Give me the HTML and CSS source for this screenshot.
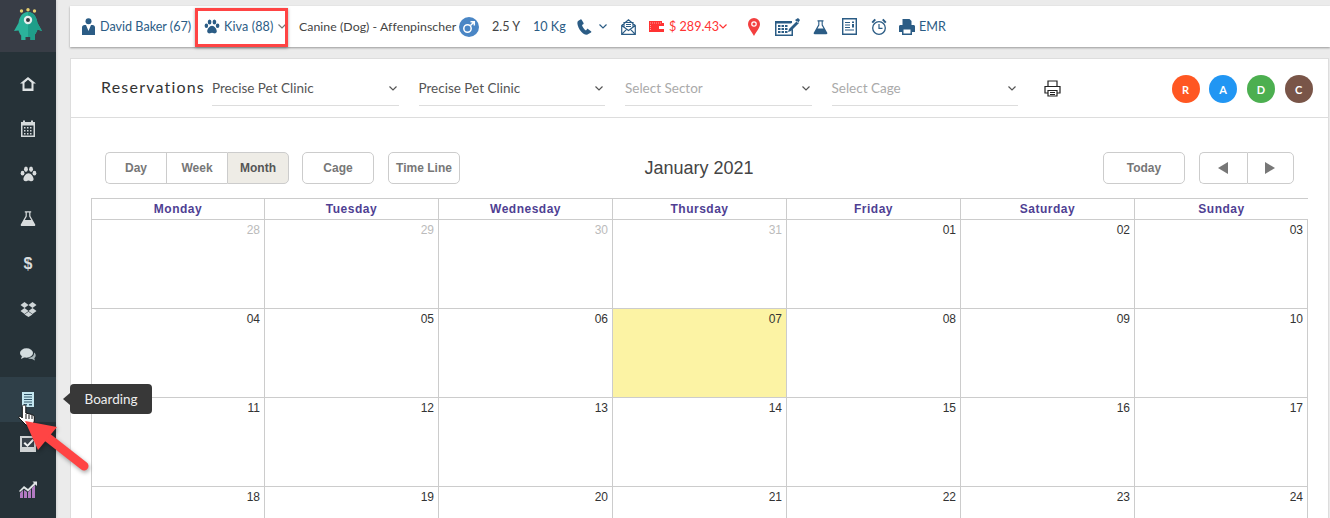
FILE: index.html
```html
<!DOCTYPE html>
<html lang="en">
<head>
    <meta charset="UTF-8">
    <title>Reservations</title>
    <link rel="stylesheet" href="styles.css">
</head>
<body>
<svg class="defs" width="0" height="0">
    <symbol id="paw" viewBox="0 0 20 18"><ellipse cx="3" cy="8" rx="2.2" ry="2.9"/><ellipse cx="7" cy="3.4" rx="2.3" ry="3.2"/><ellipse cx="13" cy="3.4" rx="2.3" ry="3.2"/><ellipse cx="17" cy="8" rx="2.2" ry="2.9"/><path d="M10 8c3 0 6 4 6 7 0 2-2 3-3.500 2.500-1-.3-1.700-.8-2.500-.8s-1.500.5-2.500.8C6 18 4 17 4 15c0-3 3-7 6-7z"/></symbol>
    <symbol id="flask" viewBox="0 0 20 20"><path d="M6 1h8v1.500h-1V7l6 10.500c.5 1-.2 2-1.200 2H2.200c-1 0-1.700-1-1.200-2L7 7V2.500H6zM8.500 2.500V7.500L6 12h8l-2.500-4.500v-5z"/></symbol>
</svg>
<div class="app">
    <aside class="sidebar">
        <div class="logo">
            <svg width="28" height="33" viewBox="0 0 28 33">
                <circle cx="7.500" cy="3" r="1.700" fill="#e8d070"/><circle cx="14" cy="1.700" r="1.700" fill="#e8d070"/><circle cx="20.500" cy="3" r="1.700" fill="#e8d070"/>
                <path d="M14 4c6 0 8.500 5 9.500 11l4.500 8-4.500-1.500c-.8 2.500-1.700 4-2.700 5V32H16.500v-3h-5v3H7.200v-4.500c-1-1-1.900-2.500-2.700-5L0 23l4.500-8C5.500 9 8 4 14 4z" fill="#2bb39b"/>
                <path d="M14 4c6 0 8.500 5 9.500 11l4.500 8-4.500-1.500c-.8 2.500-1.700 4-2.700 5V32H16.500v-3H14z" fill="#1f9e89"/>
                <circle cx="14" cy="12" r="4.200" fill="#e8eeee"/><circle cx="14" cy="12" r="2" fill="#31383f"/>
            </svg>
        </div>
        <nav class="side-nav">
            <a class="side-item"><svg width="18" height="16" viewBox="0 0 18 16"><path d="M9 1 1 7.500h2.500V15h11V7.500H17zM5.500 6.800 9 3.700l3.500 3.100v5.700h-7z" fill="#dfe3e4"/></svg></a>
            <a class="side-item"><svg width="16" height="17" viewBox="0 0 16 17"><path d="M1 2h2V.5h2V2h6V.5h2V2h2v15H1zM2.500 5.500v10h11v-10zM4 7h1.500v1.500H4zm3 0h1.500v1.500H7zm3 0h1.500v1.500H10zM4 10h1.500v1.500H4zm3 0h1.500v1.500H7zm3 0h1.500v1.500H10zM4 13h1.500v1.500H4zm3 0h1.500v1.500H7zm3 0h1.500v1.500H10z" fill="#d5dadb"/></svg></a>
            <a class="side-item"><svg class="icon-light" width="17" height="16"><use href="#paw"/></svg></a>
            <a class="side-item"><svg class="icon-light" width="16" height="17"><use href="#flask"/></svg></a>
            <a class="side-item"><span class="dollar">$</span></a>
            <a class="side-item"><svg width="17" height="15" viewBox="0 0 17 15"><path d="m4.500 0 4 3-4 3-4-3zm8 0 4 3-4 3-4-3zM4.500 6l4 3-4 3-4-3zm8 0 4 3-4 3-4-3zM4.500 12.500l4-2.700 4 2.700-4 2.500z" fill="#cfd6d8"/></svg></a>
            <a class="side-item"><svg width="16" height="13" viewBox="0 0 16 13"><ellipse cx="6.500" cy="5" rx="6.500" ry="4.700" fill="#d5dee0"/><path d="M2 8 1 11l4-2z" fill="#d5dee0"/><path d="M14 4.500c1.500 1 2 2.500 1.500 4-.3.8-.8 1.300-1.200 1.700l.7 2.300-3-1.600c-1.500.2-3-.1-4-1 3.500 0 6.500-2 6-5.400z" fill="#aab7ba"/></svg></a>
            <a class="side-item active"><svg width="12" height="15" viewBox="0 0 12 15"><path d="M0 0h12v15H0z" fill="#c4e6ef"/><path d="M2 2h8v1H2zm0 2.500h8v1H2zM2 7h8v1H2zm0 2.500h8v1H2zM2 12h3v1.500H2zm5 0h3v1.500H7z" fill="#33566a"/></svg></a>
            <a class="side-item"><svg width="17" height="16" viewBox="0 0 17 16"><path d="M0 0h16v16H0z" fill="#cfd3d4"/><path d="M2 2h12v9H2z" fill="#39424a"/><path d="m5 6 2.500 2.500L12.500 3l1.500 1.500L7.500 11 3.500 7.500z" fill="#f2f4f4"/></svg></a>
            <a class="side-item"><svg width="18" height="17" viewBox="0 0 18 17"><path d="M1 17v-5l3-3v8zm4 0V9l3 2v6zm4 0v-6l3-3v9zm4 0V7l3-3v13z" fill="#b27ac2"/><path d="m0 10 5-5 4 3 6-6-1.500-1.500H18V5l-1.500-1.500L9 10.500 5 7.500 1 11z" fill="#e1e5e6"/></svg></a>
        </nav>
    </aside>

    <main class="content">
        <header class="topbar">
            <svg class="icon-blue user-icon" width="13" height="17" viewBox="0 0 13 17"><circle cx="6.500" cy="3.300" r="3"/><path d="M0 17V9.500c0-1.500 1-2.500 2.500-2.500H4l2.500 6L9 7h1.500C12 7 13 8 13 9.500V17z"/></svg>
            <span class="owner">David Baker (67)</span>
            <div class="pet">
                <svg class="icon-blue" width="16" height="15"><use href="#paw"/></svg>
                <span class="pet-name">Kiva (88)</span>
                <svg class="chev" width="8" height="5" viewBox="0 0 8 5"><path d="m.5.5 3.500 3.500L7.500.5"/></svg>
            </div>
            <span class="breed">Canine (Dog) - Affenpinscher</span>
            <svg class="gender" width="20" height="20" viewBox="0 0 20 20"><circle cx="10" cy="10" r="10" fill="#4a86c5"/><circle cx="8.500" cy="11.500" r="3.700" fill="none" stroke="#fff" stroke-width="1.500"/><path d="m11.500 8.500 3.500-3.500M11.500 4.700H15.300V8.500" fill="none" stroke="#fff" stroke-width="1.500"/></svg>
            <span class="age">2.5 Y</span>
            <span class="weight">10 Kg</span>
            <svg class="icon-blue phone" width="15" height="16" viewBox="0 0 15 16"><path d="M3.500.5 1 2C0 3 .2 5.500 1.500 8.500s4 6 6.500 7l2 .2L14 13.500c.5-.5.400-1 0-1.300L11 10c-.4-.2-.8-.2-1.100.2L9 11.500C7.500 11 5.500 8 5 6l1.300-.8c.4-.3.500-.7.300-1.100L4.800.9C4.500.4 4 .2 3.500.5z"/></svg>
            <svg class="chev chev-phone" width="8" height="5" viewBox="0 0 8 5"><path d="m.5.5 3.500 3.500L7.500.5"/></svg>
            <svg class="mail" width="15" height="16" viewBox="0 0 15 16"><path d="M.7 6.500 7.500.8l6.800 5.700v8.800H.7zM.7 6.500l6.800 5 6.800-5M.7 15.300l4.800-5M14.300 15.300l-4.800-5M3 8V3.500h9V8M5 5.500h5M5 7.500h5" fill="none" stroke="#2b5c85" stroke-width="1.200"/></svg>
            <svg class="wallet" width="16" height="14" viewBox="0 0 16 14"><path d="M1 1h13v2h2v9H1z" fill="#f33"/><path d="M11 6h5v3h-5z" fill="#fff"/><path d="M2 3h11M2.500 5v6" stroke="#fbb" stroke-width=".8" stroke-dasharray="1 1"/></svg>
            <span class="balance">$ 289.43</span>
            <svg class="chev chev-red" width="8" height="5" viewBox="0 0 8 5"><path d="m.5.5 3.500 3.500L7.500.5"/></svg>
            <svg class="pin" width="12" height="18" viewBox="0 0 12 18"><path d="M6 0a6 6 0 0 0-6 6c0 4 4 8 6 12 2-4 6-8 6-12a6 6 0 0 0-6-6z" fill="#f33f3f"/><circle cx="6" cy="6" r="2.800" fill="#fff"/><circle cx="6" cy="6" r="1.600" fill="#f33f3f"/></svg>
            <svg class="icon-blue calc" width="25" height="18" viewBox="0 0 25 18"><path d="M0 3h17v2L15.500 5.500H1.500v11h15V12l1.500-1.500V18H0z"/><path d="M3 7h2.500v2H3zm3.500 0H9v2H6.500zM10 7h2.500v2H10zM3 10h2.500v2H3zm3.500 0H9v2H6.500zM10 10h2.500v2H10zM3 13h2.500v2H3zm3.500 0H9v2H6.500zM10 13h2.500v2H10z"/><path d="M14 11l-1 3 3-1 8-8-2-2zM20 2l3-2 2 2-2 3z"/></svg>
            <svg class="icon-blue flask" width="15" height="16"><use href="#flask"/></svg>
            <svg class="info" width="15" height="17" viewBox="0 0 15 17"><path d="M.7.7h13.600v15.600H.7z" fill="none" stroke="#2b5c85" stroke-width="1.400"/><path d="M3 4h5v1H3zm0 2.500h5v1H3zM3 9h5v1H3zm0 2.500h9v1H3zM10 3.500h2V5h-2zm0 2.500h2v3.500h-2z" fill="#2b5c85"/></svg>
            <svg class="clock" width="16" height="17" viewBox="0 0 16 17"><circle cx="8" cy="10" r="6.300" fill="none" stroke="#2b5c85" stroke-width="1.300"/><path d="M8 6v4.300h3.500" fill="none" stroke="#2b5c85" stroke-width="1.200"/><path d="M.5 4 3.500.8l1.500 1.200L2 5.300zM15.500 4 12.500.8 11 2l3 3.300z" fill="#2b5c85"/></svg>
            <svg class="icon-blue print" width="16" height="16" viewBox="0 0 16 16"><path d="M3.500 0h7L12.500 2v4h-9zM0 7.500C0 6.500.7 6 1.500 6h13c.8 0 1.500.5 1.500 1.500V13h-3v3H3v-3H0zM4.500 10.500V14.500h7v-4z"/></svg>
            <span class="emr">EMR</span>
        </header>

        <section class="panel">
            <div class="filter-bar">
                <h1 class="title">Reservations</h1>
                <div class="select"><span>Precise Pet Clinic</span><svg class="chev chev-dark" width="8" height="5" viewBox="0 0 8 5"><path d="m.5.5 3.500 3.500L7.500.5"/></svg></div>
                <div class="select"><span>Precise Pet Clinic</span><svg class="chev chev-dark" width="8" height="5" viewBox="0 0 8 5"><path d="m.5.5 3.500 3.500L7.500.5"/></svg></div>
                <div class="select empty"><span>Select Sector</span><svg class="chev chev-dark" width="8" height="5" viewBox="0 0 8 5"><path d="m.5.5 3.500 3.500L7.500.5"/></svg></div>
                <div class="select empty"><span>Select Cage</span><svg class="chev chev-dark" width="8" height="5" viewBox="0 0 8 5"><path d="m.5.5 3.500 3.500L7.500.5"/></svg></div>
                <svg class="filter-print" width="17" height="17" viewBox="0 0 17 17"><path d="M4 6V1h9v5M4 13H1V6.500h15V13h-3M4 10.500h9V16H4zM6 12.500h5M6 14.500h5" fill="none" stroke="#222" stroke-width="1.200"/></svg>
                <div class="avatars">
                    <span class="avatar av-orange">R</span>
                    <span class="avatar av-blue">A</span>
                    <span class="avatar av-green">D</span>
                    <span class="avatar av-brown">C</span>
                </div>
            </div>

            <div class="cal-toolbar">
                <div class="btn-group">
                    <button class="btn day">Day</button>
                    <button class="btn week">Week</button>
                    <button class="btn month on">Month</button>
                </div>
                <button class="btn single cage">Cage</button>
                <button class="btn single timeline">Time Line</button>
                <h2 class="cal-title">January 2021</h2>
                <button class="btn single today">Today</button>
                <div class="btn-group arrows">
                    <button class="btn arrow"><span class="tri left"></span></button>
                    <button class="btn arrow"><span class="tri right"></span></button>
                </div>
            </div>

            <div class="calendar">
                <div class="dow">Monday</div><div class="dow">Tuesday</div><div class="dow">Wednesday</div><div class="dow">Thursday</div><div class="dow">Friday</div><div class="dow">Saturday</div><div class="dow">Sunday</div>
                <div class="cell muted">28</div><div class="cell muted">29</div><div class="cell muted">30</div><div class="cell muted">31</div><div class="cell">01</div><div class="cell">02</div><div class="cell">03</div>
                <div class="cell">04</div><div class="cell">05</div><div class="cell">06</div><div class="cell now">07</div><div class="cell">08</div><div class="cell">09</div><div class="cell">10</div>
                <div class="cell">11</div><div class="cell">12</div><div class="cell">13</div><div class="cell">14</div><div class="cell">15</div><div class="cell">16</div><div class="cell">17</div>
                <div class="cell">18</div><div class="cell">19</div><div class="cell">20</div><div class="cell">21</div><div class="cell">22</div><div class="cell">23</div><div class="cell">24</div>
            </div>
        </section>
    </main>
</div>

<!-- annotations drawn over the screenshot -->
<div class="highlight"></div>
<div class="tooltip">Boarding</div>
<svg class="cursor" width="18" height="22" viewBox="0 0 18 22"><path d="M6 1c1 0 1.800.7 1.800 1.700V9l6 1.500c1.500.5 2.500 1 2.500 2.500v4l-1.500 4H8L1 14c-.7-1 .5-2.300 1.700-1.600L4.300 14V2.700C4.300 1.700 5 1 6 1z" fill="#fff" stroke="#111" stroke-width="1"/><path d="M8 10v5M11 10.500V15M14 11v4" stroke="#111" stroke-width="1"/></svg>
<svg class="arrow-mark" width="72" height="62" viewBox="0 0 72 62"><path d="M64 51 27 22" stroke="#f44" stroke-width="9" stroke-linecap="round"/><path d="M5 6 37 12 18 35z" fill="#f44"/></svg>
</body>
</html>
```

FILE: styles.css
```css
* {
    box-sizing: border-box;
}
html, body {
    margin: 0;
    height: 518px;
    overflow: hidden;
}
body {
    font-family: Lato, "Open Sans", sans-serif;
    background-color: #ebebeb;
    color: #333;
    position: relative;
}
.defs {
    position: absolute;
}
.app {
    display: flex;
    height: 518px;
}

/* sidebar */
.sidebar {
    width: 56px;
    flex-shrink: 0;
    background: #263238;
    box-shadow: 1px 0 2px rgba(0, 0, 0, 0.1);
}
.logo {
    height: 52px;
    background: #383d46;
    display: flex;
    justify-content: center;
    padding-top: 8px;
}
.side-nav {
    display: flex;
    flex-direction: column;
    padding-top: 9px;
}
.side-item {
    height: 45.1px;
    display: flex;
    align-items: center;
    justify-content: center;
}
.side-item.active {
    background: #2f3f48;
}
.icon-light {
    fill: #d8dcdd;
}
.dollar {
    font-family: "Liberation Sans", sans-serif;
    font-weight: bold;
    font-size: 16px;
    color: #d8dcdd;
}

/* top bar */
.content {
    flex: 1;
    min-width: 0;
    padding: 6px 0 0 14px;
}
.topbar {
    height: 41px;
    background: #fff;
    box-shadow: 0 1px 2px rgba(0, 0, 0, 0.35);
    display: flex;
    align-items: center;
    padding-left: 12px;
    font-size: 12.6px;
    color: #2b5c85;
    white-space: nowrap;
}
.topbar svg {
    flex-shrink: 0;
}
.icon-blue {
    fill: #2b5c85;
}
.chev {
    fill: none;
    stroke: #777;
    stroke-width: 1.2;
}
.chev-phone {
    stroke: #2b5c85;
    margin-left: 7px;
}
.chev-red {
    stroke: #f33;
    margin-left: 3px;
}
.chev-dark {
    stroke: #555;
}
.owner {
    margin-left: 5px;
    width: 97px;
}
.pet {
    display: flex;
    align-items: center;
    gap: 4px;
    width: 95px;
    margin-left: 7px;
}
.pet-name {
    width: 50px;
    letter-spacing: 0.1px;
}
.breed {
    color: #444;
    width: 160px;
    font-size: 12.3px;
    letter-spacing: 0.05px;
}
.age {
    color: #444;
    margin-left: 13px;
    width: 41px;
}
.weight {
    width: 44px;
}
.mail {
    margin-left: 14px;
}
.wallet {
    margin-left: 12px;
}
.balance {
    color: #f33;
    margin-left: 5px;
    width: 47px;
}
.pin {
    margin-left: 21px;
}
.calc {
    margin-left: 15px;
}
.flask {
    margin-left: 13px;
}
.info {
    margin-left: 14px;
}
.clock {
    margin-left: 14px;
}
.print {
    margin-left: 12px;
}
.emr {
    margin-left: 4px;
}

/* main panel */
.panel {
    margin: 11px 1px 0 0;
    height: 470px;
    background: #fff;
    border: 1px solid #ddd;
    border-bottom: 0;
    overflow: hidden;
}
.filter-bar {
    height: 59px;
    border-bottom: 1px solid #ddd;
    display: flex;
    align-items: flex-start;
    padding: 10px 0 0 30px;
}
.title {
    font-size: 16px;
    font-weight: normal;
    letter-spacing: 1.2px;
    color: #333;
    margin: 8px 0 0;
    width: 111px;
}
.select {
    width: 186.5px;
    height: 37px;
    margin-right: 20px;
    border-bottom: 1px solid #ddd;
    display: flex;
    align-items: center;
    justify-content: space-between;
    padding: 2px 2px 0 0;
    font-size: 13.5px;
    color: #555;
}
.select.empty {
    color: #aaa;
}
.filter-print {
    margin: 11px 0 0 5.5px;
}
.avatars {
    display: flex;
    gap: 9.7px;
    margin: 6px 0 0 111px;
}
.avatar {
    width: 28px;
    height: 28px;
    border-radius: 50%;
    color: #fff;
    font-size: 11px;
    font-weight: bold;
    display: flex;
    align-items: center;
    justify-content: center;
}
.av-orange { background: #ff5722; }
.av-blue { background: #2196f3; }
.av-green { background: #4caf50; }
.av-brown { background: #795548; }

/* calendar toolbar */
.cal-toolbar {
    display: flex;
    align-items: center;
    height: 32px;
    margin: 34px 0 14px;
    padding-left: 34px;
}
.btn-group {
    display: flex;
}
.btn {
    height: 32px;
    font-family: "Liberation Sans", sans-serif;
    font-size: 12px;
    font-weight: bold;
    color: #777;
    background: #fff;
    border: 1px solid #ccc;
    padding: 0;
}
.btn.single {
    border-radius: 5px;
}
.btn-group .btn {
    border-right: 0;
}
.btn-group .btn:first-child {
    border-radius: 5px 0 0 5px;
}
.btn-group .btn:last-child {
    border-right: 1px solid #ccc;
    border-radius: 0 5px 5px 0;
}
.day { width: 61px; }
.week { width: 61px; }
.month { width: 62px; }
.btn.on {
    background: #eeece6;
    color: #555;
}
.cage {
    width: 72px;
    margin-left: 13px;
}
.timeline {
    width: 72px;
    margin-left: 14px;
}
.cal-title {
    font-family: "Liberation Sans", sans-serif;
    font-size: 18px;
    font-weight: normal;
    color: #444;
    margin: 0 165px 0 0;
    width: 478px;
    text-align: center;
}
.today {
    width: 82px;
}
.arrows {
    margin-left: 14px;
}
.arrow {
    width: 47.5px;
    display: flex;
    align-items: center;
    justify-content: center;
}
.tri {
    width: 0;
    height: 0;
    border-top: 6px solid transparent;
    border-bottom: 6px solid transparent;
}
.tri.left {
    border-right: 10px solid #777;
}
.tri.right {
    border-left: 10px solid #777;
}

/* month grid */
.calendar {
    display: grid;
    grid-template-columns: 173px repeat(5, 174px) 173px;
    grid-auto-rows: 89px;
    grid-template-rows: 22px;
    margin-left: 20px;
    border-left: 1px solid #ccc;
    font-family: "Liberation Sans", sans-serif;
    width: 1218px;
}
.dow {
    border-top: 1px solid #ccc;
    border-bottom: 1px solid #ccc;
    border-right: 1px solid #ccc;
    text-align: center;
    font-size: 12px;
    font-weight: bold;
    letter-spacing: 0.5px;
    color: #4f3f93;
    line-height: 20px;
}
.dow:nth-child(7) {
    border-right: 0;
}
.cell {
    border-right: 1px solid #ccc;
    border-bottom: 1px solid #ccc;
    text-align: right;
    font-size: 12px;
    color: #333;
    padding: 3px 4px 0 0;
}
.cell.muted {
    color: #bbb;
}
.cell.now {
    background: #fcf3a4;
}

/* annotations */
.highlight {
    position: absolute;
    left: 195px;
    top: 8px;
    width: 93px;
    height: 39px;
    border: 3px solid #f44;
    box-shadow: 0 1px 3px rgba(0, 0, 0, 0.35);
}
.tooltip {
    position: absolute;
    left: 70px;
    top: 384px;
    width: 82px;
    height: 30px;
    background: #383838;
    border-radius: 4px;
    color: #eee;
    font-size: 13.5px;
    line-height: 31px;
    text-align: center;
}
.tooltip::before {
    content: "";
    position: absolute;
    left: -7px;
    top: 9px;
    border-top: 6px solid transparent;
    border-bottom: 6px solid transparent;
    border-right: 7px solid #383838;
}
.cursor {
    position: absolute;
    left: 18px;
    top: 404px;
}
.arrow-mark {
    position: absolute;
    left: 20px;
    top: 415px;
    filter: drop-shadow(1px 2px 2px rgba(0, 0, 0, 0.35));
}
```
